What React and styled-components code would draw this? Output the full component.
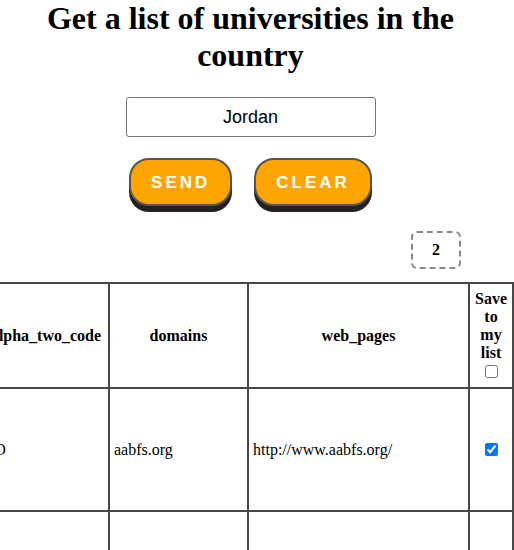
import styled, { createGlobalStyle } from 'styled-components';

const GlobalStyle = createGlobalStyle`
  html, body {
    margin: 0;
    padding: 0;
    background: #fff;
    overflow: hidden;
  }
`;

const Page = styled.div`
  width: 514px;
  height: 550px;
  overflow: hidden;
  display: flex;
  flex-direction: column;
`;

const Top = styled.div`
  display: flex;
  flex-direction: column;
  align-items: center;
  padding-right: 13px;
`;

const Title = styled.h1`
  margin: 0;
  font-family: 'Liberation Serif', 'Times New Roman', serif;
  font-size: 32px;
  line-height: 37px;
  font-weight: 700;
  text-align: center;
  color: #000;
`;

const CountryInput = styled.input`
  margin-top: 23px;
  width: 250px;
  height: 40px;
  box-sizing: border-box;
  padding: 0;
  border: 1px solid #767676;
  border-radius: 3px;
  text-align: center;
  font-family: 'Liberation Sans', Arial, sans-serif;
  font-size: 18px;
  color: #000;
`;

const Buttons = styled.div`
  display: flex;
  gap: 22px;
  margin-top: 21px;
`;

const ActionButton = styled.button`
  height: 48px;
  box-sizing: border-box;
  padding: 2px 20px 0;
  border: 2px solid #555;
  border-radius: 20px;
  background: #ffa500;
  color: #fff;
  font-family: 'Liberation Sans', Arial, sans-serif;
  font-weight: 700;
  font-size: 17px;
  letter-spacing: 3px;
  box-shadow: 0 6px 0 #222;
  cursor: pointer;
`;

const CounterRow = styled.div`
  display: flex;
  justify-content: flex-end;
  padding-right: 53px;
  margin-top: 25px;
`;

const Counter = styled.div`
  width: 50px;
  height: 38px;
  box-sizing: border-box;
  border: 2px dashed #888;
  border-radius: 6px;
  display: flex;
  align-items: center;
  justify-content: center;
  font-family: 'Liberation Serif', 'Times New Roman', serif;
  font-weight: 700;
  font-size: 16px;
`;

const TableWrap = styled.div`
  display: flex;
  justify-content: flex-end;
  overflow: hidden;
  margin-top: 13px;
`;

const Table = styled.table`
  flex-shrink: 0;
  border-collapse: collapse;
  font-family: 'Liberation Serif', 'Times New Roman', serif;
  font-size: 16px;
  color: #000;
`;

const HeadCell = styled.th`
  border: 2px solid #474747;
  padding: 4px;
  height: 95px;
  font-weight: 700;
  text-align: center;
  width: ${p => (p.$w ? `${p.$w}px` : 'auto')};
`;

const Cell = styled.td`
  border: 2px solid #474747;
  padding: 4px;
  height: ${p => p.$h}px;
  text-align: ${p => (p.$center ? 'center' : 'left')};
`;

const universities = [
  { code: 'JO', domain: 'aabfs.org', page: 'http://www.aabfs.org/' },
  { code: 'JO', domain: 'aabu.edu.jo', page: 'http://www.aabu.edu.jo/' },
];

export default function App() {
  return (
    <Page>
      <GlobalStyle />
      <Top>
        <Title>
          Get a list of universities in the
          <br />
          country
        </Title>
        <CountryInput defaultValue="Jordan" />
        <Buttons>
          <ActionButton>SEND</ActionButton>
          <ActionButton>CLEAR</ActionButton>
        </Buttons>
      </Top>

      <CounterRow>
        <Counter>2</Counter>
      </CounterRow>

      <TableWrap>
        <Table>
          <thead>
            <tr>
              <HeadCell $w={116}>alpha_two_code</HeadCell>
              <HeadCell $w={129}>domains</HeadCell>
              <HeadCell $w={211}>web_pages</HeadCell>
              <HeadCell $w={34}>
                Save to my list <input type="checkbox" />
              </HeadCell>
            </tr>
          </thead>
          <tbody>
            {universities.map(u => (
              <tr key={u.domain}>
                <Cell $h={113}>{u.code}</Cell>
                <Cell $h={113}>{u.domain}</Cell>
                <Cell $h={113}>{u.page}</Cell>
                <Cell $h={113} $center>
                  <input type="checkbox" defaultChecked />
                </Cell>
              </tr>
            ))}
          </tbody>
        </Table>
      </TableWrap>
    </Page>
  );
}
